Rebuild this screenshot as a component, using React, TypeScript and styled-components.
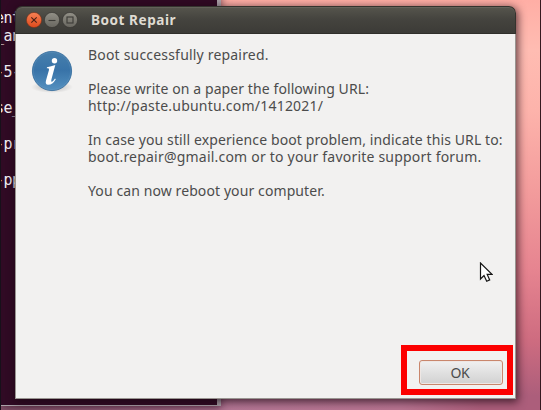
import React from "react";
import styled, { createGlobalStyle } from "styled-components";

const GlobalStyle = createGlobalStyle`
  * { box-sizing: border-box; }
  body { margin: 0; overflow: hidden; }
`;

const Desktop = styled.main`
  position: relative;
  width: 541px;
  height: 410px;
  overflow: hidden;
  border-left: 1px solid #17101a;
  border-right: 1px solid #35181f;
  background:
    linear-gradient(90deg, #8b5870 0, #b47795 220px, #b87491 400px, #ac5e7b 480px) 0 396px / 100% 14px no-repeat,
    linear-gradient(180deg, #ffaea5 0, #ffbcb2 50px, #fdb3ab 110px, #f39c9c 190px, #e68490 270px, #ce6c80 340px, #ac5e7b 396px);
  font-family: "Noto Sans", "Open Sans", sans-serif;
`;

const Terminal = styled.section`
  position: absolute;
  left: 0;
  top: -10px;
  width: 220px;
  height: 416px;
  padding-top: 19px;
  border-right: 4px solid #aaa1a8;
  border-bottom: 1px solid #aaa1a8;
  background: #300a24;
  color: #f5f1f4;
  box-shadow: 0 2px 8px rgba(40, 10, 30, 0.6);
`;

const Output = styled.pre`
  margin: 0 0 0 -6px;
  font: 15px/18px "DejaVu Sans Mono", monospace;
  letter-spacing: -0.5px;
`;

const Dialog = styled.section`
  position: absolute;
  left: 14px;
  top: 6px;
  width: 501px;
  height: 393px;
  display: flex;
  flex-direction: column;
  border-radius: 7px 7px 0 0;
  box-shadow: 1px 2px 9px 1px rgba(25, 5, 15, 0.7);
`;

const TitleBar = styled.header`
  height: 28px;
  flex: none;
  display: flex;
  align-items: center;
  gap: 2px;
  padding: 0 0 0 10px;
  border: 1px solid #34332e;
  border-bottom-color: #302f2b;
  border-radius: 7px 7px 0 0;
  background: linear-gradient(#56554d, #45443f 45%, #3c3b37);
  box-shadow: inset 0 1px #626159;
`;

const ControlIcon = styled.svg`
  display: block;
  width: 16px;
  height: 16px;
`;

const Title = styled.h1`
  margin: 0 0 0 11px;
  color: #dfdbd2;
  font-size: 13.6px;
  line-height: 20px;
  font-weight: 700;
  letter-spacing: 0.52px;
  white-space: nowrap;
`;

const DialogBody = styled.div`
  flex: 1;
  display: flex;
  flex-direction: column;
  justify-content: space-between;
  border: 1px solid #999591;
  border-top: 0;
  background: #f2f1f0;
`;

const Content = styled.div`
  display: flex;
  padding: 12px 0 0 14px;
`;

const InfoIcon = styled.svg`
  flex: none;
  width: 44px;
  height: 48px;
  margin: 2px 14px 0 0;
`;

const Message = styled.div`
  color: #4c4c4c;
  font-size: 14px;
  line-height: 17px;
`;

const Line = styled.p<{ $tracking: number }>`
  margin: 0;
  min-height: 17px;
  white-space: nowrap;
  letter-spacing: ${({ $tracking }) => $tracking}px;
`;

const Actions = styled.footer`
  display: flex;
  justify-content: flex-end;
  padding: 0 2px 3px 0;
`;

const Highlight = styled.div`
  display: flex;
  width: 112px;
  height: 50px;
  padding: 9px 4px 4px 12px;
  border: 6px solid #fc0000;
`;

const Button = styled.button`
  width: 84px;
  height: 25px;
  padding: 0 2px 0 0;
  border: 1px solid #c9866c;
  border-radius: 3px;
  background: linear-gradient(#f0f0f0, #dfdfdf 55%, #d1d1d1);
  box-shadow: inset 0 0 0 1px #eee7e4;
  color: #4c4c4c;
  font: 14px/20px "Noto Sans", sans-serif;
  letter-spacing: -0.2px;
`;

const Cursor = styled.svg`
  position: absolute;
  left: 478px;
  top: 262px;
  width: 14px;
  height: 21px;
`;

const lines = [
  { text: "Boot successfully repaired.", tracking: 0.19 },
  { text: "", tracking: 0 },
  { text: "Please write on a paper the following URL:", tracking: 0.09 },
  { text: "http://paste.ubuntu.com/1412021/", tracking: 0.22 },
  { text: "", tracking: 0 },
  { text: "In case you still experience boot problem, indicate this URL to:", tracking: 0.11 },
  { text: "boot.repair@gmail.com or to your favorite support forum.", tracking: 0.21 },
  { text: "", tracking: 0 },
  { text: "You can now reboot your computer.", tracking: 0.1 },
];

const terminalOutput = "ent\n_an\n\n-5-\n\nse_\n\n-pr\n\n-pp";

type ControlKind = "close" | "minimize" | "maximize";

function WindowControl({ kind }: { kind: ControlKind }) {
  const close = kind === "close";
  return (
    <ControlIcon viewBox="0 0 16 16" aria-label={kind}>
      <defs>
        <linearGradient id={kind} x2="0" y2="1">
          <stop stopColor={close ? "#f68155" : "#929087"} />
          <stop offset="1" stopColor={close ? "#df4a1c" : "#68665f"} />
        </linearGradient>
      </defs>
      <circle cx="8" cy="8" r="7.6" fill={`url(#${kind})`} stroke={close ? "#793219" : "#34332f"} strokeWidth=".6" />
      <g fill="none" stroke={close ? "#482015" : "#3b3a36"} strokeWidth="1.1">
        {close && <path d="M5.3 5.3l5.4 5.4M10.7 5.3l-5.4 5.4" />}
        {kind === "minimize" && <path d="M4.5 8.5h7" />}
        {kind === "maximize" && <rect x="5" y="5" width="6" height="6" />}
      </g>
    </ControlIcon>
  );
}

export default function App() {
  return (
    <>
      <GlobalStyle />
      <Desktop>
        <Terminal><Output>{terminalOutput}</Output></Terminal>
        <Dialog>
          <TitleBar>
            <WindowControl kind="close" />
            <WindowControl kind="minimize" />
            <WindowControl kind="maximize" />
            <Title>Boot Repair</Title>
          </TitleBar>
          <DialogBody>
            <Content>
              <InfoIcon viewBox="0 0 44 48" aria-label="Information">
                <defs>
                  <linearGradient id="info-fill" x2="0" y2="1">
                    <stop stopColor="#477fac" />
                    <stop offset=".48" stopColor="#3873a8" />
                    <stop offset="1" stopColor="#5591c0" />
                  </linearGradient>
                  <radialGradient id="info-shadow">
                    <stop stopColor="#777" stopOpacity=".5" />
                    <stop offset="1" stopColor="#777" stopOpacity="0" />
                  </radialGradient>
                </defs>
                <ellipse cx="22" cy="39" rx="21" ry="6" fill="url(#info-shadow)" />
                <circle cx="22" cy="23" r="19.6" fill="url(#info-fill)" stroke="#2f689b" strokeWidth=".8" />
                <circle cx="22" cy="23" r="18.6" fill="none" stroke="#7ea9ca" strokeOpacity=".35" strokeWidth=".6" />
                <circle cx="24.5" cy="12.8" r="2.7" fill="white" />
                <path d="M17 19.3Q21 18.5 25.3 17L21.4 31.5Q20.7 34.2 22 33.8Q23.2 33.3 25 30.5L25.8 31.2Q22.4 37 18 36.8Q14.9 36.5 16 32.5L18.9 22.3Q19.5 20.4 18 20.3L16.8 20.2Z" fill="white" />
              </InfoIcon>
              <Message>
                {lines.map((line, index) => <Line key={index} $tracking={line.tracking}>{line.text}</Line>)}
              </Message>
            </Content>
            <Actions><Highlight><Button>OK</Button></Highlight></Actions>
          </DialogBody>
        </Dialog>
        <Cursor viewBox="0 0 14 21" aria-hidden="true">
          <path d="M1.5 1v16l3.5-3.5 2.7 5.8 3-1.4-2.5-5.5H13Z" fill="white" stroke="#161616" strokeWidth="1.2" />
        </Cursor>
      </Desktop>
    </>
  );
}
